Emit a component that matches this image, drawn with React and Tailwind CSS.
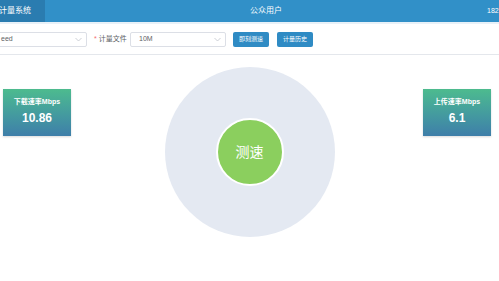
import React from "react";

const font = { fontFamily: '"Liberation Sans", "Noto Sans CJK SC", sans-serif' };

function Chevron() {
  return (
    <svg width="7" height="5" viewBox="0 0 7 5" className="text-[#c0c4cc]">
      <path d="M0.5 1 L3.5 4 L6.5 1" fill="none" stroke="currentColor" strokeWidth="0.8" />
    </svg>
  );
}

function Card({ title, value }) {
  return (
    <div className="w-[68px] h-[47px] bg-gradient-to-b from-[#4dbb8e] to-[#3f7ea9] flex flex-col items-center text-white shadow-[0_1px_2px_rgba(0,0,0,0.15)]">
      <div className="mt-[8px] text-[7px] font-bold leading-[9px]">{title}</div>
      <div className="mt-[5px] text-[12px] font-bold leading-[14px]">{value}</div>
    </div>
  );
}

export default function App() {
  return (
    <div className="w-[499px] h-[281px] bg-white overflow-hidden" style={font}>
      <div className="h-[22px] bg-[#3190c8] flex items-center text-white">
        <div className="w-[46px] h-full bg-[#2a7cb0] flex items-center text-[8px] -ml-[1px] whitespace-nowrap">计量系统</div>
        <div className="flex-1 text-center text-[8px]">公众用户</div>
        <div className="text-[7px] -mr-[2px] w-[14px]">182</div>
      </div>
      <div className="h-[2px] bg-[#e8f1f8]" />
      <div className="h-[31px] border-b border-[#e4e7ec] flex items-center text-[7px] text-[#606266]">
        <div className="-ml-[10px] w-[97px] h-[15px] border border-[#dcdfe6] rounded-[2px] flex items-center justify-between pl-[10px] pr-[4px]">
          <span>eed</span>
          <Chevron />
        </div>
        <div className="ml-[7px] w-[36px] whitespace-nowrap"><span className="text-[#f56c6c]">*</span> 计量文件</div>
        <div className="w-[96px] h-[15px] border border-[#dcdfe6] rounded-[2px] flex items-center justify-between pl-[8px] pr-[4px]">
          <span>10M</span>
          <Chevron />
        </div>
        <div className="ml-[7px] w-[36px] h-[15px] bg-[#2f8bc4] rounded-[2px] text-white text-[6px] flex items-center justify-center">即刻测速</div>
        <div className="ml-[8px] w-[36px] h-[15px] bg-[#2f8bc4] rounded-[2px] text-white text-[6px] flex items-center justify-center">计量历史</div>
      </div>
      <div className="grid grid-cols-[1fr_auto_1fr]">
        <div className="pt-[34px] pl-[3px] justify-self-start">
          <Card title="下载速率Mbps" value="10.86" />
        </div>
        <div className="mt-[12px] w-[170px] h-[170px] rounded-full bg-[#e4e9f2] flex items-center justify-center">
          <div className="w-[68px] h-[68px] rounded-full bg-[#8bcf5e] border-2 border-white flex items-center justify-center text-white text-[14px]">测速</div>
        </div>
        <div className="pt-[34px] pr-[8px] justify-self-end">
          <Card title="上传速率Mbps" value="6.1" />
        </div>
      </div>
    </div>
  );
}
